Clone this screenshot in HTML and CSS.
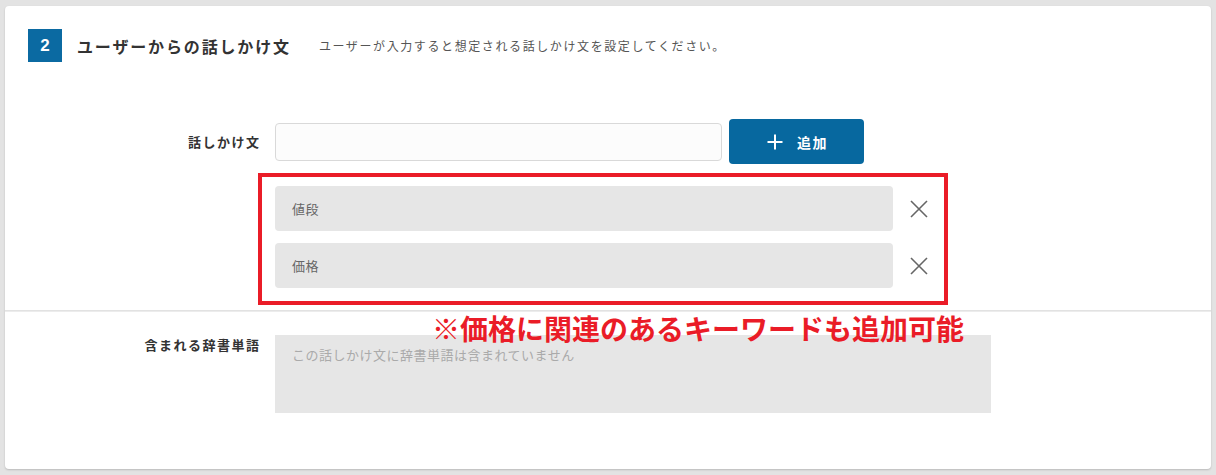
FILE: index.html
```html
<!DOCTYPE html>
<html lang="ja">
<head>
<meta charset="utf-8">
<title>ユーザーからの話しかけ文</title>
<link rel="stylesheet" href="styles.css">
</head>
<body>
<div class="card">
  <div class="head">
    <span class="badge">2</span>
    <h2 class="title">ユーザーからの話しかけ文</h2>
    <p class="desc">ユーザーが入力すると想定される話しかけ文を設定してください。</p>
  </div>

  <div class="row row-input">
    <label class="label">話しかけ文</label>
    <div class="field">
      <input class="text-input" type="text">
      <button class="add-btn" type="button">
        <svg class="plus" width="16" height="16" viewBox="0 0 16 16"><path d="M8 0.5V15.5M0.5 8H15.5" stroke="#fff" stroke-width="2" fill="none"/></svg>
        <span>追加</span>
      </button>
    </div>
  </div>

  <div class="row">
    <div></div>
    <div class="highlight">
      <ul class="items">
        <li class="item">
          <span class="chip">値段</span>
          <button class="remove" type="button"><svg width="18" height="18" viewBox="0 0 18 18"><path d="M1 1L17 17M17 1L1 17" stroke="#666" stroke-width="1.6" fill="none"/></svg></button>
        </li>
        <li class="item">
          <span class="chip">価格</span>
          <button class="remove" type="button"><svg width="18" height="18" viewBox="0 0 18 18"><path d="M1 1L17 17M17 1L1 17" stroke="#666" stroke-width="1.6" fill="none"/></svg></button>
        </li>
      </ul>
    </div>
  </div>

  <div class="divider"></div>

  <div class="row row-dict">
    <span class="label">含まれる辞書単語</span>
    <div class="dict-box">この話しかけ文に辞書単語は含まれていません</div>
  </div>

  <p class="note">※価格に関連のあるキーワードも追加可能</p>
</div>
</body>
</html>
```

FILE: styles.css
```css
* { box-sizing: border-box; }

html, body {
  margin: 0;
  height: 100%;
}

body {
  background: #e3e3e3;
  padding: 6px 5px;
  font-family: "Noto Sans CJK JP", "Noto Sans", sans-serif;
  color: #333;
}

.card {
  position: relative;
  height: 463px;
  background: #fff;
  border-radius: 4px;
  box-shadow: 0 1px 2px rgba(0, 0, 0, 0.18);
  padding: 23px 23px 0 23px;
}

.head {
  display: flex;
  align-items: center;
  height: 33px;
}

.badge {
  width: 34px;
  height: 33px;
  background: #0b6aa2;
  color: #fff;
  font-family: "Liberation Sans", Arial, sans-serif;
  font-weight: bold;
  font-size: 17px;
  display: flex;
  align-items: center;
  justify-content: center;
}

.title {
  margin: 0 0 0 15px;
  font-size: 16px;
  font-weight: bold;
  letter-spacing: 1.85px;
  color: #333;
  line-height: 1;
}

.desc {
  margin: 0 0 0 28px;
  font-size: 12px;
  letter-spacing: 1.6px;
  color: #555;
  line-height: 1;
}

.row {
  display: grid;
  grid-template-columns: 231px 1fr;
  column-gap: 16px;
}

.label {
  text-align: right;
  font-size: 13px;
  font-weight: bold;
  letter-spacing: 1.5px;
  margin-right: -1.5px;
  color: #333;
  line-height: 20px;
}

.row-input {
  margin-top: 57px;
  align-items: center;
}

.field {
  display: flex;
  align-items: center;
  gap: 7px;
  height: 45px;
}

.text-input {
  width: 447px;
  height: 38px;
  border: 1px solid #d9d9d9;
  border-radius: 4px;
  background: #fcfcfc;
  padding: 0 12px;
  font: inherit;
}

.add-btn {
  width: 135px;
  height: 45px;
  border: none;
  border-radius: 4px;
  background: #07689f;
  color: #fff;
  display: flex;
  align-items: center;
  justify-content: center;
  gap: 14px;
  font-family: "Noto Sans CJK JP", sans-serif;
  font-size: 14px;
  font-weight: bold;
  letter-spacing: 1.5px;
  padding: 0 0 0 2px;
}

.plus { display: block; }

.highlight {
  margin-top: 9px;
  margin-left: -17px;
  width: 690px;
  border: 4px solid #ea1c27;
  padding: 9px 0 13px 13px;
}

.items {
  list-style: none;
  margin: 0;
  padding: 0;
  display: flex;
  flex-direction: column;
  gap: 12px;
}

.item {
  display: flex;
  align-items: center;
  gap: 17px;
}

.chip {
  width: 618px;
  height: 45px;
  background: #e6e6e6;
  border-radius: 4px;
  display: flex;
  align-items: center;
  padding-left: 17px;
  font-size: 13px;
  letter-spacing: 0.5px;
  color: #666;
}

.remove {
  border: none;
  background: none;
  padding: 0;
  width: 18px;
  height: 18px;
  display: block;
}

.remove svg { display: block; }

.divider {
  margin: 5px -23px 0 -23px;
  height: 2px;
  border-top: 1px solid #e2e2e2;
  border-bottom: 1px solid #ececec;
}

.row-dict {
  margin-top: 23px;
  align-items: start;
}

.dict-box {
  width: 716px;
  height: 78px;
  background: #e6e6e6;
  padding: 10px 17px;
  font-size: 13px;
  letter-spacing: 0.5px;
  line-height: 20px;
  color: #aaa;
}

.note {
  position: absolute;
  left: 427px;
  top: 308px;
  margin: 0;
  font-size: 28px;
  font-weight: bold;
  line-height: 1;
  color: #ea1c27;
  white-space: nowrap;
}
```
